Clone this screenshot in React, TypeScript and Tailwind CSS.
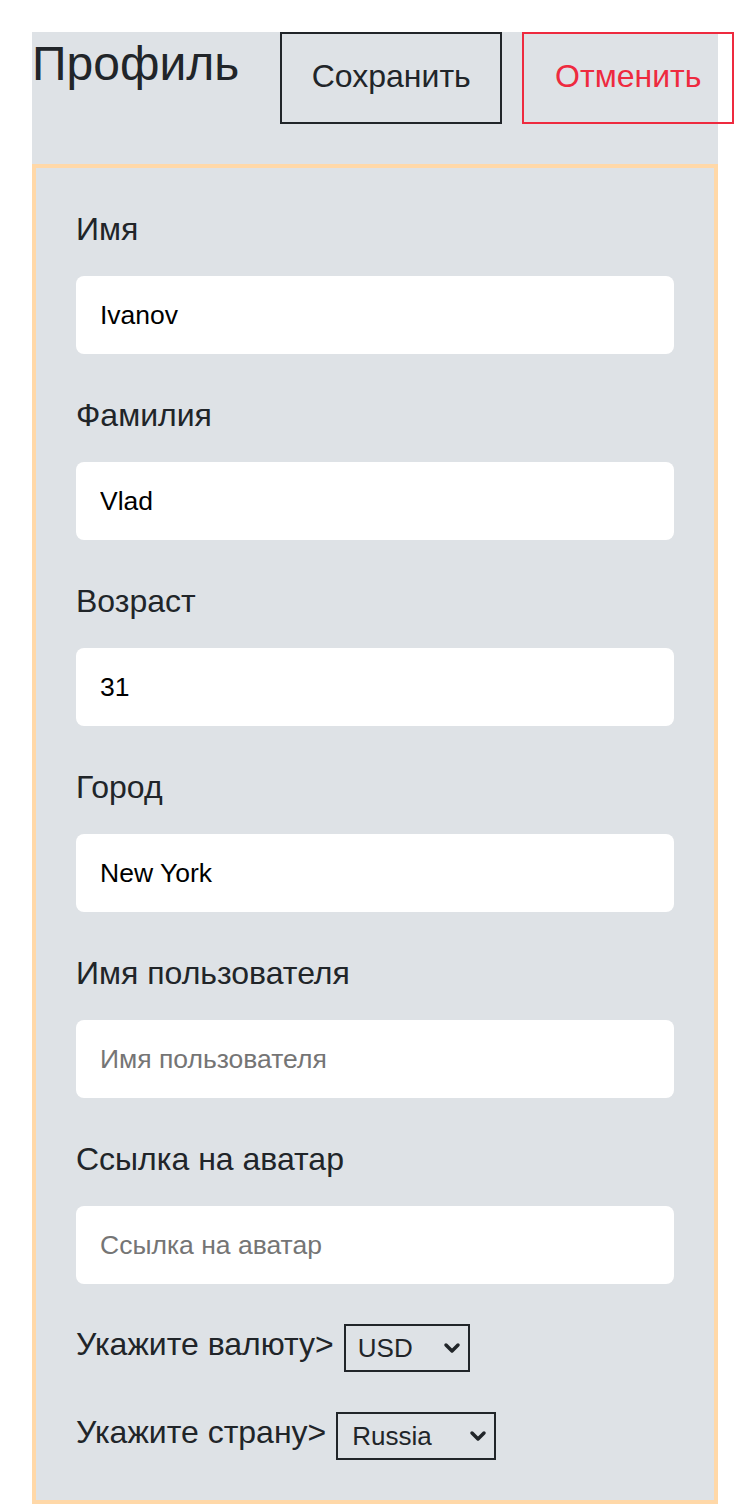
import { useState } from 'react';

const fields = [
  { label: 'Имя', value: 'Ivanov' },
  { label: 'Фамилия', value: 'Vlad' },
  { label: 'Возраст', value: '31' },
  { label: 'Город', value: 'New York' },
  { label: 'Имя пользователя', value: '' },
  { label: 'Ссылка на аватар', value: '' },
];

const Chevron = () => (
  <svg
    className="absolute right-[9px] top-1/2 -translate-y-1/2 pointer-events-none"
    width="18"
    height="18"
    viewBox="0 0 18 18"
    fill="none"
    stroke="#212529"
    strokeWidth="3.5"
    strokeLinecap="round"
    strokeLinejoin="round"
  >
    <path d="M3 6l6 6 6-6" />
  </svg>
);

const App = () => {
  const [values, setValues] = useState(fields.map((f) => f.value));
  const [currency, setCurrency] = useState('USD');
  const [country, setCountry] = useState('Russia');

  const listFields = fields.map((field, i) => (
    <div key={field.label} className="flex flex-col mb-[43px]">
      <label className="text-[32px] leading-[37px] h-[37px] mb-7">
        {field.label}
      </label>
      <input
        className="w-[598px] h-[78px] px-6 bg-white rounded-lg text-[26.5px] text-black placeholder:text-[#757575] outline-none"
        placeholder={field.label}
        value={values[i]}
        onChange={(e) => {
          const next = [...values];
          next[i] = e.target.value;
          setValues(next);
        }}
      />
    </div>
  ));

  return (
    <div className="p-8 pb-0 font-['Liberation_Sans',Arial,sans-serif] text-[#212529]">
      <div className="w-[686px] bg-[#dee2e6]">
        <div className="flex items-start h-[132px]">
          <h1 className="text-[48px] leading-normal -mt-[4px] shrink-0">Профиль</h1>
          <button className="shrink-0 ml-[41px] w-[222px] h-[92px] pb-[5px] border-2 border-[#212529] text-[32px] flex items-center justify-center">
            Сохранить
          </button>
          <button className="shrink-0 ml-5 w-[212px] h-[92px] pb-[5px] border-2 border-[#ee2a3f] text-[#ee2a3f] text-[32px] flex items-center justify-center">
            Отменить
          </button>
        </div>
        <div className="border-4 border-[#ffd8a8] px-10 pt-[43px] pb-10">
          {listFields}
          <div className="flex items-center gap-[10px] h-[48px] -mt-[3px]">
            <span className="text-[32px] leading-[37px] mb-[7px]">Укажите валюту&gt;</span>
            <div className="relative">
              <select
                className="appearance-none w-[126px] h-[48px] border-2 border-[#212529] text-[26px] pl-[12px] pr-8 outline-none"
                value={currency}
                onChange={(e) => setCurrency(e.target.value)}
              >
                <option>USD</option>
                <option>EUR</option>
                <option>RUB</option>
              </select>
              <Chevron />
            </div>
          </div>
          <div className="flex items-center gap-[10px] h-[48px] mt-10">
            <span className="text-[32px] leading-[37px] mb-[7px]">Укажите страну&gt;</span>
            <div className="relative">
              <select
                className="appearance-none w-[160px] h-[48px] border-2 border-[#212529] text-[26px] pl-[14px] pr-8 outline-none"
                value={country}
                onChange={(e) => setCountry(e.target.value)}
              >
                <option>Russia</option>
                <option>USA</option>
                <option>Germany</option>
              </select>
              <Chevron />
            </div>
          </div>
        </div>
      </div>
    </div>
  );
};

export default App;
